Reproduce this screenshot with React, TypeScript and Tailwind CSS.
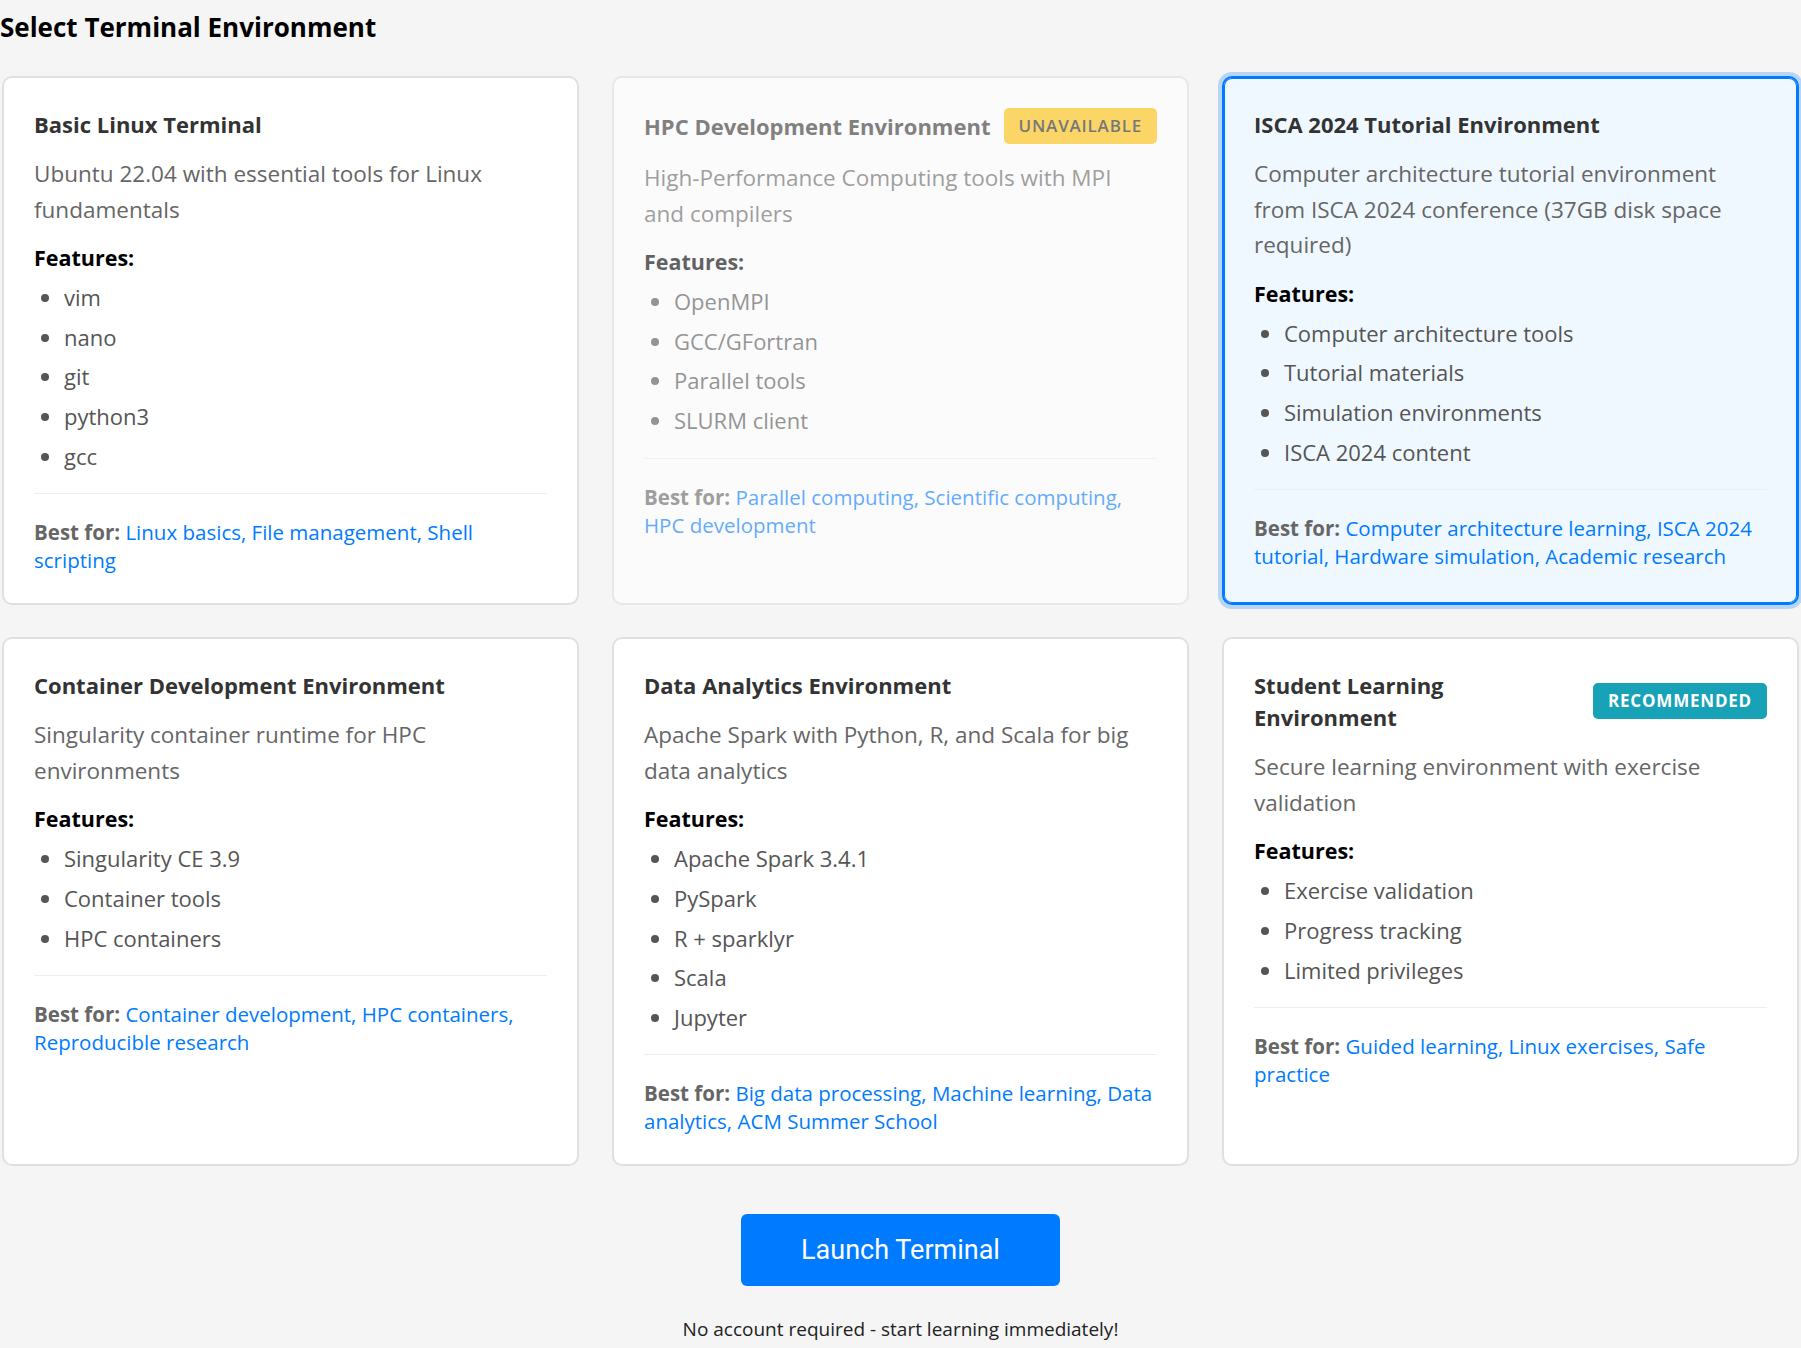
import clsx from 'clsx';

interface Environment {
  id: string;
  name: string;
  description: string;
  features: string[];
  bestFor: string;
  badge?: 'unavailable' | 'recommended';
}

const environments: Environment[] = [
  {
    id: 'basic',
    name: 'Basic Linux Terminal',
    description: 'Ubuntu 22.04 with essential tools for Linux fundamentals',
    features: ['vim', 'nano', 'git', 'python3', 'gcc'],
    bestFor: 'Linux basics, File management, Shell scripting',
  },
  {
    id: 'hpc',
    name: 'HPC Development Environment',
    description: 'High-Performance Computing tools with MPI and compilers',
    features: ['OpenMPI', 'GCC/GFortran', 'Parallel tools', 'SLURM client'],
    bestFor: 'Parallel computing, Scientific computing, HPC development',
    badge: 'unavailable',
  },
  {
    id: 'isca',
    name: 'ISCA 2024 Tutorial Environment',
    description: 'Computer architecture tutorial environment from ISCA 2024 conference (37GB disk space required)',
    features: ['Computer architecture tools', 'Tutorial materials', 'Simulation environments', 'ISCA 2024 content'],
    bestFor: 'Computer architecture learning, ISCA 2024 tutorial, Hardware simulation, Academic research',
  },
  {
    id: 'container',
    name: 'Container Development Environment',
    description: 'Singularity container runtime for HPC environments',
    features: ['Singularity CE 3.9', 'Container tools', 'HPC containers'],
    bestFor: 'Container development, HPC containers, Reproducible research',
  },
  {
    id: 'analytics',
    name: 'Data Analytics Environment',
    description: 'Apache Spark with Python, R, and Scala for big data analytics',
    features: ['Apache Spark 3.4.1', 'PySpark', 'R + sparklyr', 'Scala', 'Jupyter'],
    bestFor: 'Big data processing, Machine learning, Data analytics, ACM Summer School',
  },
  {
    id: 'student',
    name: 'Student Learning Environment',
    description: 'Secure learning environment with exercise validation',
    features: ['Exercise validation', 'Progress tracking', 'Limited privileges'],
    bestFor: 'Guided learning, Linux exercises, Safe practice',
    badge: 'recommended',
  },
];

const selectedId = 'isca';

function Badge({ kind }: { kind: 'unavailable' | 'recommended' }) {
  return (
    <span
      className={clsx(
        'shrink-0 rounded-[5px] px-[15px] py-[6px] text-[17px] leading-[24px] font-bold tracking-[0.8px] uppercase',
        kind === 'unavailable' ? 'bg-[#ffc107] font-semibold text-[#212529]' : 'bg-[#17a2b8] text-white',
      )}
    >
      {kind}
    </span>
  );
}

function EnvironmentCard({ env }: { env: Environment }) {
  const isSelected = env.id === selectedId;
  const isUnavailable = env.badge === 'unavailable';

  return (
    <div
      className={clsx(
        'rounded-[10px] border-2 px-[30px] pt-[30px] pb-[29px]',
        isSelected
          ? 'border-[#007bff] bg-[#f0f8ff] shadow-[inset_0_0_0_1px_#007bff,0_0_0_4px_rgba(0,123,255,0.25)]'
          : 'border-[#e0e0e0] bg-white',
        isUnavailable && 'opacity-60',
      )}
    >
      <div className="flex items-center justify-between gap-2">
        <h3 className="text-[22px] leading-[32px] font-bold text-[#333]">{env.name}</h3>
        {env.badge && <Badge kind={env.badge} />}
      </div>
      <p className="mt-[16px] text-[22.5px] leading-[35.6px] text-[#666]">{env.description}</p>
      <p className="mt-[14px] text-[21.5px] leading-[34px] font-bold text-black">Features:</p>
      <ul className="mt-[3px] list-disc pl-[30px] text-[22px] leading-[39.6px] text-[#555]">
        {env.features.map((feature) => (
          <li key={feature}>{feature}</li>
        ))}
      </ul>
      <div className="mt-[17px] border-t border-[#eee] pt-[24px] text-[20.5px] leading-[28px]">
        <span className="font-bold text-[#666]">Best for: </span>
        <span className="text-[#007bff]">{env.bestFor}</span>
      </div>
    </div>
  );
}

export default function App() {
  return (
    <main className="min-h-screen bg-[#f5f5f5] font-['Open_Sans',sans-serif]">
      <h2 className="pt-[11px] text-[26px] leading-[32px] font-bold text-black">Select Terminal Environment</h2>
      <div className="mt-[33px] grid grid-cols-3 gap-x-[33px] gap-y-[32px] px-[2px]">
        {environments.map((env) => (
          <EnvironmentCard key={env.id} env={env} />
        ))}
      </div>
      <div className="mt-[48px] flex flex-col items-center">
        <button
          type="button"
          className="rounded-[6px] bg-[#007bff] px-[60px] py-[18px] font-['Roboto',sans-serif] text-[27px] leading-[36px] text-white"
        >
          Launch Terminal
        </button>
        <p className="mt-[30px] pb-[20px] text-[19px] leading-[26px] text-[#222]">
          No account required - start learning immediately!
        </p>
      </div>
    </main>
  );
}
